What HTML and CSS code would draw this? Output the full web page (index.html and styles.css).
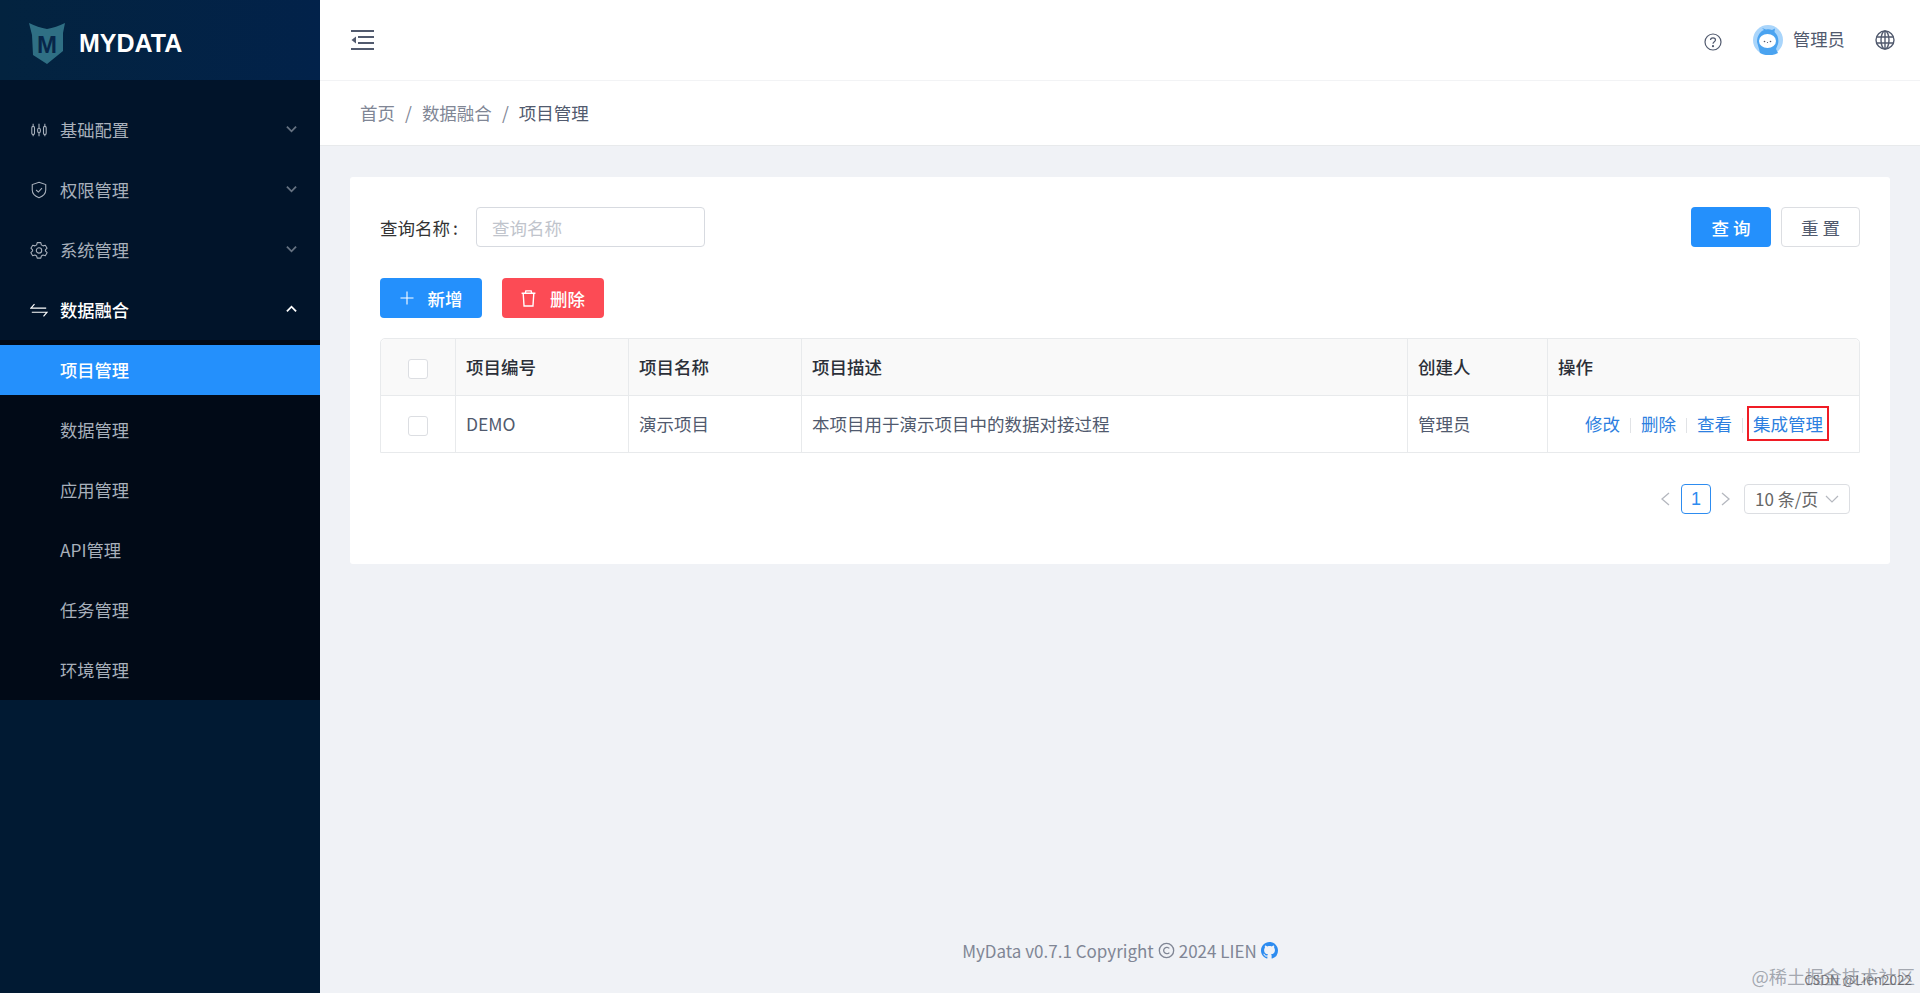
FILE: index.html
```html
<!DOCTYPE html>
<html lang="zh-CN">
<head>
<meta charset="utf-8">
<title>MyData</title>
<link rel="stylesheet" href="styles.css">
</head>
<body>
<div class="app">
  <aside class="sidebar">
    <div class="logo">
      <svg class="logo-mark" viewBox="0 0 36 41"><path d="M0 0 C6 3 12 5 18 6 C24 5 30 3 36 0 L34 10 V28 L18 41 L4 32 L3 12 Z" fill="#2f6f84"/><text x="18" y="30" class="logo-m">M</text></svg>
      <span class="logo-text">MYDATA</span>
    </div>
    <nav class="menu">
      <div class="menu-item">
        <svg class="mi" viewBox="0 0 20 20" fill="none" stroke="currentColor" stroke-width="1.2"><rect x="2" y="6" width="3" height="9" rx="1.5"/><path d="M3.500 3v3M3.500 15v2"/><rect x="8.500" y="8" width="3" height="5" rx="1.500"/><path d="M10 3v5M10 13v4"/><rect x="15" y="6" width="3" height="9" rx="1.500"/><path d="M16.500 3v3M16.500 15v2"/></svg>
        <span class="mt">基础配置</span>
        <svg class="chev" viewBox="0 0 12 8"><path d="M1 1.500 L6 6.500 L11 1.500"/></svg>
      </div>
      <div class="menu-item">
        <svg class="mi" viewBox="0 0 20 20" fill="none" stroke="currentColor" stroke-width="1.2"><path d="M10 1.500 L17.500 4 V10 C17.500 14.500 14 17 10 18.500 C6 17 2.500 14.500 2.500 10 V4 Z"/><path d="M6.800 10 L9.300 12.300 L13.300 7.800"/></svg>
        <span class="mt">权限管理</span>
        <svg class="chev" viewBox="0 0 12 8"><path d="M1 1.500 L6 6.500 L11 1.500"/></svg>
      </div>
      <div class="menu-item">
        <svg class="mi" viewBox="0 0 20 20" fill="none" stroke="currentColor" stroke-width="1.2"><path d="M8 1.800 H12 L12.600 4.300 L14.500 5.400 L17 4.700 L19 8 L17.100 9.900 V11.100 L19 13 L17 16.300 L14.500 15.600 L12.600 16.700 L12 19 H8 L7.400 16.700 L5.500 15.600 L3 16.300 L1 13 L2.900 11.100 V9.900 L1 8 L3 4.700 L5.500 5.400 L7.400 4.300 Z" stroke-linejoin="round"/><circle cx="10" cy="10.500" r="3"/></svg>
        <span class="mt">系统管理</span>
        <svg class="chev" viewBox="0 0 12 8"><path d="M1 1.500 L6 6.500 L11 1.500"/></svg>
      </div>
      <div class="menu-item open">
        <svg class="mi" viewBox="0 0 20 20" fill="none" stroke="currentColor" stroke-width="1.3"><path d="M5 3.500 L1 8 H18"/><path d="M2 12.500 H19 L15 17"/></svg>
        <span class="mt">数据融合</span>
        <svg class="chev" viewBox="0 0 12 8"><path d="M1 6.500 L6 1.500 L11 6.500"/></svg>
      </div>
      <div class="submenu">
        <div class="sub-item active">项目管理</div>
        <div class="sub-item">数据管理</div>
        <div class="sub-item">应用管理</div>
        <div class="sub-item">API管理</div>
        <div class="sub-item">任务管理</div>
        <div class="sub-item">环境管理</div>
      </div>
    </nav>
  </aside>
  <div class="main">
    <header class="topbar">
      <svg class="toggle" viewBox="0 0 23 20" fill="#515a6e"><rect x="0" y="0" width="23" height="2"/><rect x="7" y="6" width="16" height="2"/><rect x="7" y="12" width="16" height="2"/><rect x="0" y="18" width="23" height="2"/><path d="M5 6.500 V13.500 L0.500 10 Z"/></svg>
      <div class="top-right">
        <svg class="help" viewBox="0 0 18 18" fill="none" stroke="#515a6e" stroke-width="1.2"><circle cx="9" cy="9" r="8"/><path d="M6.500 7 C6.500 5.500 7.700 4.800 9 4.800 C10.400 4.800 11.500 5.700 11.500 7 C11.500 8.700 9 8.800 9 10.800"/><circle cx="9" cy="13.200" r=".5" fill="#515a6e"/></svg>
        <svg class="avatar" viewBox="0 0 30 30"><circle cx="15" cy="15" r="15" fill="#a9d5fb"/><path d="M6 24 L4 17 C4 10 8 6 11 5 L9 3 L13 4.500 C15 4 17 4 19 5 L22 3.500 L21.500 7 C25 10 26 15 25 19 L23 24 L25 28 C20 31 12 31 7 28 Z" fill="#4aa3f0"/><ellipse cx="14.500" cy="16" rx="8.500" ry="7" fill="#fff"/><circle cx="11.500" cy="16.500" r=".8" fill="#556"/><circle cx="14.500" cy="17.500" r=".6" fill="#556"/><circle cx="17.500" cy="16.500" r=".8" fill="#556"/></svg>
        <span class="uname">管理员</span>
        <svg class="globe" viewBox="0 0 20 20" fill="none" stroke="#515a6e" stroke-width="1.4"><circle cx="10" cy="10" r="9"/><ellipse cx="10" cy="10" rx="4" ry="9"/><path d="M10 1v18M1.500 7h17M1.500 13h17"/></svg>
      </div>
    </header>
    <div class="crumbs">
      <span class="c-link">首页</span><span class="c-sep">/</span><span class="c-link">数据融合</span><span class="c-sep">/</span><span class="c-cur">项目管理</span>
    </div>
    <main class="content">
      <section class="card">
        <div class="filter">
          <label class="f-label">查询名称<span class="f-colon">:</span></label>
          <div class="f-input">查询名称</div>
          <div class="f-actions">
            <button class="btn primary wide">查 询</button>
            <button class="btn ghost wide2">重 置</button>
          </div>
        </div>
        <div class="tools">
          <button class="btn primary tool">
            <svg class="b-plus" viewBox="0 0 14 14" fill="none" stroke="#fff" stroke-width="1.100"><path d="M7 .5v13M.5 7h13"/></svg>新增
          </button>
          <button class="btn danger tool">
            <svg class="b-bin" viewBox="0 0 14 16" fill="none" stroke="#fff" stroke-width="1.300"><path d="M.5 3h13M4 3 L4.500 .8 H9.500 L10 3M2 3 L2.800 15 H11.200 L12 3"/></svg>删除
          </button>
        </div>
        <table class="grid">
          <thead>
            <tr>
              <th class="c-check"><span class="check"></span></th>
              <th class="c-code">项目编号</th>
              <th class="c-name">项目名称</th>
              <th class="c-desc">项目描述</th>
              <th class="c-user">创建人</th>
              <th class="c-op">操作</th>
            </tr>
          </thead>
          <tbody>
            <tr>
              <td class="c-check"><span class="check"></span></td>
              <td>DEMO</td>
              <td>演示项目</td>
              <td>本项目用于演示项目中的数据对接过程</td>
              <td>管理员</td>
              <td class="ops"><a>修改</a><i></i><a>删除</a><i></i><a>查看</a><i></i><a class="mark">集成管理</a></td>
            </tr>
          </tbody>
        </table>
        <div class="pager">
          <svg class="arrow" viewBox="0 0 10 14"><path d="M9 1 L2 7 L9 13"/></svg>
          <span class="page">1</span>
          <svg class="arrow" viewBox="0 0 10 14"><path d="M1 1 L8 7 L1 13"/></svg>
          <span class="size">10 条/页<svg class="size-ic" viewBox="0 0 14 8"><path d="M1 1 L7 7 L13 1"/></svg></span>
        </div>
      </section>
    </main>
    <footer class="foot">MyData v0.7.1 Copyright<svg class="copy" viewBox="0 0 18 18" fill="none" stroke="#808695" stroke-width="1.400"><circle cx="9" cy="9" r="7.600"/><path d="M12 6.800 A3.400 3.400 0 1 0 12 11.200"/></svg>2024 LIEN<svg class="gh" viewBox="0 0 16 16"><path fill="#2d8cf0" d="M8 0C3.580 0 0 3.580 0 8c0 3.540 2.290 6.530 5.470 7.590.4.070.55-.17.55-.38 0-.19-.01-.82-.01-1.490-2.010.37-2.530-.49-2.690-.94-.09-.23-.48-.94-.82-1.130-.28-.15-.68-.52-.01-.53.630-.01 1.080.58 1.230.82.720 1.210 1.870.87 2.330.66.070-.52.280-.87.510-1.070-1.780-.2-3.640-.89-3.640-3.950 0-.87.310-1.590.820-2.150-.08-.2-.36-1.020.08-2.120 0 0 .67-.21 2.200.82.640-.18 1.320-.27 2-.27s1.360.09 2 .27c1.530-1.040 2.200-.82 2.200-.82.44 1.100.16 1.920.08 2.120.51.560.82 1.270.82 2.150 0 3.070-1.870 3.750-3.650 3.950.29.250.54.730.54 1.480 0 1.070-.01 1.930-.01 2.200 0 .21.150.460.550.380A8.010 8.010 0 0 0 16 8c0-4.420-3.580-8-8-8z"/></svg></footer>
  </div>
</div>
<div class="wm">@稀土掘金技术社区</div>
<div class="wm wm2">CSDN @Lien2022</div>
</body>
</html>
```
FILE: styles.css
```css
* { box-sizing: border-box; }
html, body { margin: 0; height: 993px; overflow: hidden; }
body { font-family: "Noto Sans CJK SC", "Liberation Sans", sans-serif; font-size: 17.5px; color: #515a6e; background: #f0f2f6; }
.app { display: flex; height: 993px; }
.sidebar { width: 320px; flex: none; background: #011a33; display: flex; flex-direction: column; font-size: 17.300px; }
.logo { height: 80px; background: linear-gradient(90deg, #03233f, #02224a); display: flex; align-items: center; padding: 6px 0 0 29px; gap: 14px; }
.logo-mark { width: 36px; height: 41px; }
.logo-m { font-family: "Liberation Sans", sans-serif; font-weight: 700; font-size: 24px; fill: #07264a; text-anchor: middle; }
.logo-text { font-family: "Liberation Sans", sans-serif; font-weight: 700; font-size: 25px; color: #fff; }
.menu { padding-top: 25px; background: #01142a; }
.menu-item { height: 50px; margin-bottom: 10px; display: flex; align-items: center; padding: 0 23px 0 30px; color: #a8b0bb; }
.menu-item.open { color: #fff; font-weight: 500; margin-bottom: 5px; }
.mi { width: 18px; height: 18px; flex: none; }
.mt { margin-left: 12px; padding-bottom: 2px; }
.chev { width: 11px; height: 8px; margin-left: auto; margin-top: -2px; fill: none; stroke: currentColor; stroke-width: 2; opacity: .6; }
.open .chev { opacity: 1; }
.submenu { background: #010a17; padding: 5px 0; }
.sub-item { height: 50px; margin-bottom: 10px; padding: 0 0 2px 60px; display: flex; align-items: center; color: #a8b0bb; }
.sub-item:last-child { margin-bottom: 0; }
.sub-item.active { background: #2490fc; color: #fff; font-weight: 500; }
.main { flex: 1; display: flex; flex-direction: column; min-width: 0; }
.topbar { height: 81px; flex: none; background: #fff; display: flex; align-items: center; padding: 0 25px 0 31px; border-bottom: 1px solid #f2f3f5; }
.toggle { width: 23px; height: 20px; }
.top-right { margin-left: auto; display: flex; align-items: center; }
.help { width: 18px; height: 18px; margin-top: 3px; margin-right: 1px; }
.avatar { width: 30px; height: 30px; margin-left: 30px; margin-top: -1px; }
.uname { margin-left: 10px; font-size: 17.400px; margin-top: -3px; }
.globe { width: 20px; height: 20px; margin-left: 30px; }
.crumbs { height: 65px; flex: none; background: #fff; border-bottom: 1px solid #e8eaec; padding: 0 0 1px 40px; display: flex; align-items: center; }
.c-link { color: #808695; }
.c-sep { color: #808695; margin: 0 10px; }
.c-cur { color: #515a6e; }
.content { flex: 1; padding: 31px 30px 0; min-height: 0; }
.card { background: #fff; border-radius: 3px; height: 387px; padding: 30px; }
.filter { display: flex; align-items: center; height: 40px; }
.f-label { color: #333; width: 96px; flex: none; white-space: nowrap; }
.f-colon { margin-left: 3px; }
.f-input { width: 229px; height: 40px; border: 1px solid #d7dae0; border-radius: 4px; padding-left: 15px; color: #c0c4cc; display: flex; align-items: center; }
.f-actions { margin-left: auto; display: flex; gap: 10px; }
.btn { height: 40px; border-radius: 4px; border: 0; font: inherit; display: flex; align-items: center; justify-content: center; padding: 0; }
.primary { background: #2490fc; color: #fff; font-weight: 500; }
.danger { background: #fc4b55; color: #fff; font-weight: 500; }
.ghost { background: #fff; border: 1px solid #dcdee2; color: #515a6e; }
.wide { width: 80px; }
.wide2 { width: 79px; }
.tools { display: flex; gap: 20px; margin-top: 31px; }
.tool { width: 102px; gap: 14px; }
.b-plus { width: 14px; height: 14px; }
.b-bin { width: 15px; height: 17px; }
.grid { width: 1480px; height: 115px; margin-top: 20px; border-collapse: separate; border-spacing: 0; table-layout: fixed; border: 1px solid #e8eaec; border-radius: 5px 5px 0 0; }
.grid th, .grid td { text-align: left; padding: 0 10px 2px; border-left: 1px solid #e8eaec; }
.grid th { height: 57px; background: #f9f9f9; color: #2b2f38; font-weight: 500; border-bottom: 1px solid #e8eaec; }
.grid th:first-child, .grid td:first-child { border-left: 0; }
.grid th:first-child { border-top-left-radius: 5px; }
.grid th:last-child { border-top-right-radius: 5px; }
.grid td { height: 56px; color: #515a6e; }
.grid .c-check { width: 74px; text-align: center; padding: 0 0 2px; }
.c-code { width: 173px; }
.c-name { width: 173px; }
.c-desc { width: 606px; }
.c-user { width: 140px; }
.check { display: inline-block; width: 20px; height: 20px; border: 1px solid #dcdee2; border-radius: 3px; background: #fff; vertical-align: middle; }
.grid .ops { padding: 0 0 2px 37px; white-space: nowrap; }
.ops a { color: #2d7fe0; }
.ops i { display: inline-block; width: 1px; height: 15px; background: #e1e3e6; margin: 0 10px; vertical-align: -2px; }
.ops .mark { display: inline-block; border: 2px solid #f01c25; padding: 0 4px; line-height: 31px; height: 35px; margin-left: -6px; }
.pager { display: flex; align-items: center; justify-content: flex-end; margin-top: 31px; padding-right: 10px; height: 30px; }
.arrow { width: 10px; height: 14px; margin: 0 11px 0 10px; fill: none; stroke: #b5b8bf; stroke-width: 1.300; }
.page { width: 30px; height: 30px; border: 1px solid #2d8cf0; border-radius: 4px; color: #2d8cf0; display: flex; align-items: center; justify-content: center; font-family: "Liberation Sans", sans-serif; font-size: 18px; }
.size { width: 106px; height: 30px; border: 1px solid #dcdee2; border-radius: 4px; margin-left: 2px; display: flex; align-items: center; padding: 0 0 1px 10px; font-size: 17px; color: #666; white-space: pre; }
.size-ic { width: 14px; height: 8px; margin-left: 7px; fill: none; stroke: #b5b8bf; stroke-width: 1.200; }
.foot { height: 86px; flex: none; display: flex; align-items: center; justify-content: center; gap: 4px; color: #808695; font-size: 17px; white-space: pre; }
.copy { width: 17px; height: 17px; }
.gh { width: 17px; height: 17px; }
.wm { position: absolute; right: 5px; bottom: 4px; font-size: 18.300px; color: rgba(130,135,145,.7); }
.wm2 { right: 8px; bottom: 4px; color: rgba(90,90,95,.8); font-size: 13.500px; }
```
